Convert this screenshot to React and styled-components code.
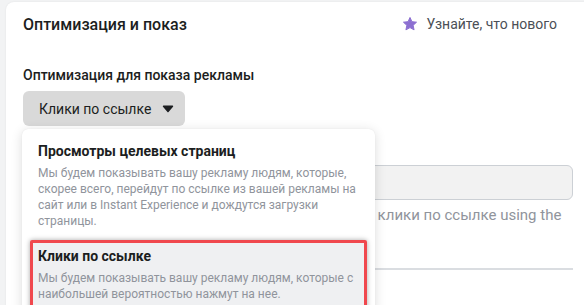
import styled, { createGlobalStyle } from "styled-components";

const GlobalStyle = createGlobalStyle`
  html, body {
    margin: 0;
    padding: 0;
    background: #f2f3f4;
    font-family: Roboto, "Liberation Sans", sans-serif;
    overflow: hidden;
  }
`;

const Page = styled.div`
  width: 584px;
  height: 305px;
  padding: 2px 0 0 6px;
  box-sizing: border-box;
  overflow: hidden;
`;

const Card = styled.section`
  position: relative;
  width: 584px;
  height: 320px;
  background: #fff;
  border-radius: 8px 0 0 0;
  box-shadow: 0 0 2px rgba(0, 0, 0, 0.08);
  padding: 0 17px;
  box-sizing: border-box;
`;

const Header = styled.div`
  display: flex;
  align-items: center;
  justify-content: space-between;
  height: 44px;
  padding-right: 16px;
`;

const Title = styled.h2`
  margin: 0;
  font-size: 16px;
  font-weight: 500;
  color: #1c1e21;
`;

const NewsLink = styled.a`
  display: flex;
  align-items: center;
  gap: 8px;
  font-size: 14px;
  color: #4b4f56;
`;

const Label = styled.div`
  margin-top: 20px;
  font-size: 14px;
  font-weight: 500;
  color: #1c1e21;
  line-height: 18px;
`;

const Dropdown = styled.button`
  margin-top: 7px;
  display: flex;
  align-items: center;
  gap: 11px;
  height: 35px;
  padding: 0 11px 0 16px;
  border: none;
  border-radius: 6px;
  background: #d9d9d9;
  font-family: inherit;
  font-size: 14px;
  color: #1c1e21;
`;

const Field = styled.div`
  margin-top: 39px;
  height: 35px;
  border: 1px solid #ccd0d5;
  border-radius: 6px;
  background: #f2f2f2;
  box-sizing: border-box;
`;

const Help = styled.div`
  margin-top: 5px;
  padding-left: 7px;
  font-size: 15px;
  line-height: 20px;
  color: #90949c;
`;

const Divider = styled.hr`
  margin: 43px 0 0;
  border: none;
  border-top: 2px solid #dadde1;
`;

const Menu = styled.div`
  position: absolute;
  left: 16px;
  top: 127px;
  width: 353px;
  padding: 6px 8px;
  box-sizing: border-box;
  background: #fff;
  border-radius: 6px;
  box-shadow: 0 2px 12px rgba(0, 0, 0, 0.14), 0 0 1px rgba(0, 0, 0, 0.1);
  display: flex;
  flex-direction: column;
  gap: 3px;
`;

const Option = styled.div`
  padding: 8px;
  border-radius: 2px;
  background: ${(p) => (p.$active ? "#eff0f2" : "#fff")};
  box-shadow: ${(p) =>
    p.$active
      ? "inset 0 0 0 3px #f0484e, 0 0 5px rgba(0, 0, 0, 0.35)"
      : "none"};
`;

const OptionTitle = styled.div`
  font-size: 14px;
  font-weight: 700;
  line-height: 16px;
  color: #1c1e21;
`;

const OptionText = styled.div`
  margin-top: 6px;
  font-size: 12px;
  line-height: 16px;
  color: #90949c;
`;

const Star = () => (
  <svg width="16" height="16" viewBox="0 0 24 24">
    <path
      d="M12 2.2l2.9 6.3 6.9.8-5.1 4.7 1.4 6.8L12 17.4l-6.1 3.4 1.4-6.8-5.1-4.7 6.9-.8z"
      fill="#8c6fd1"
      stroke="#8c6fd1"
      strokeWidth="1.5"
      strokeLinejoin="round"
    />
  </svg>
);

const Caret = () => (
  <svg width="12" height="8" viewBox="0 0 12 8">
    <path d="M1.5 1.2h9L6 6.6z" fill="#1c1e21" stroke="#1c1e21" strokeWidth="1.4" strokeLinejoin="round" />
  </svg>
);

export default function App() {
  return (
    <>
      <GlobalStyle />
      <Page>
        <Card>
          <Header>
            <Title>Оптимизация и показ</Title>
            <NewsLink>
              <Star />
              Узнайте, что нового
            </NewsLink>
          </Header>
          <Label>Оптимизация для показа рекламы</Label>
          <Dropdown>
            Клики по ссылке
            <Caret />
          </Dropdown>
          <Field />
          <Help>
            We'll deliver your ads to the right people to get most клики по
            ссылке using the
          </Help>
          <Divider />
          <Menu>
            <Option>
              <OptionTitle>Просмотры целевых страниц</OptionTitle>
              <OptionText>
                Мы будем показывать вашу рекламу людям, которые, скорее всего,
                перейдут по ссылке из вашей рекламы на сайт или в Instant
                Experience и дождутся загрузки страницы.
              </OptionText>
            </Option>
            <Option $active>
              <OptionTitle>Клики по ссылке</OptionTitle>
              <OptionText>
                Мы будем показывать вашу рекламу людям, которые с наибольшей
                вероятностью нажмут на нее.
              </OptionText>
            </Option>
          </Menu>
        </Card>
      </Page>
    </>
  );
}
